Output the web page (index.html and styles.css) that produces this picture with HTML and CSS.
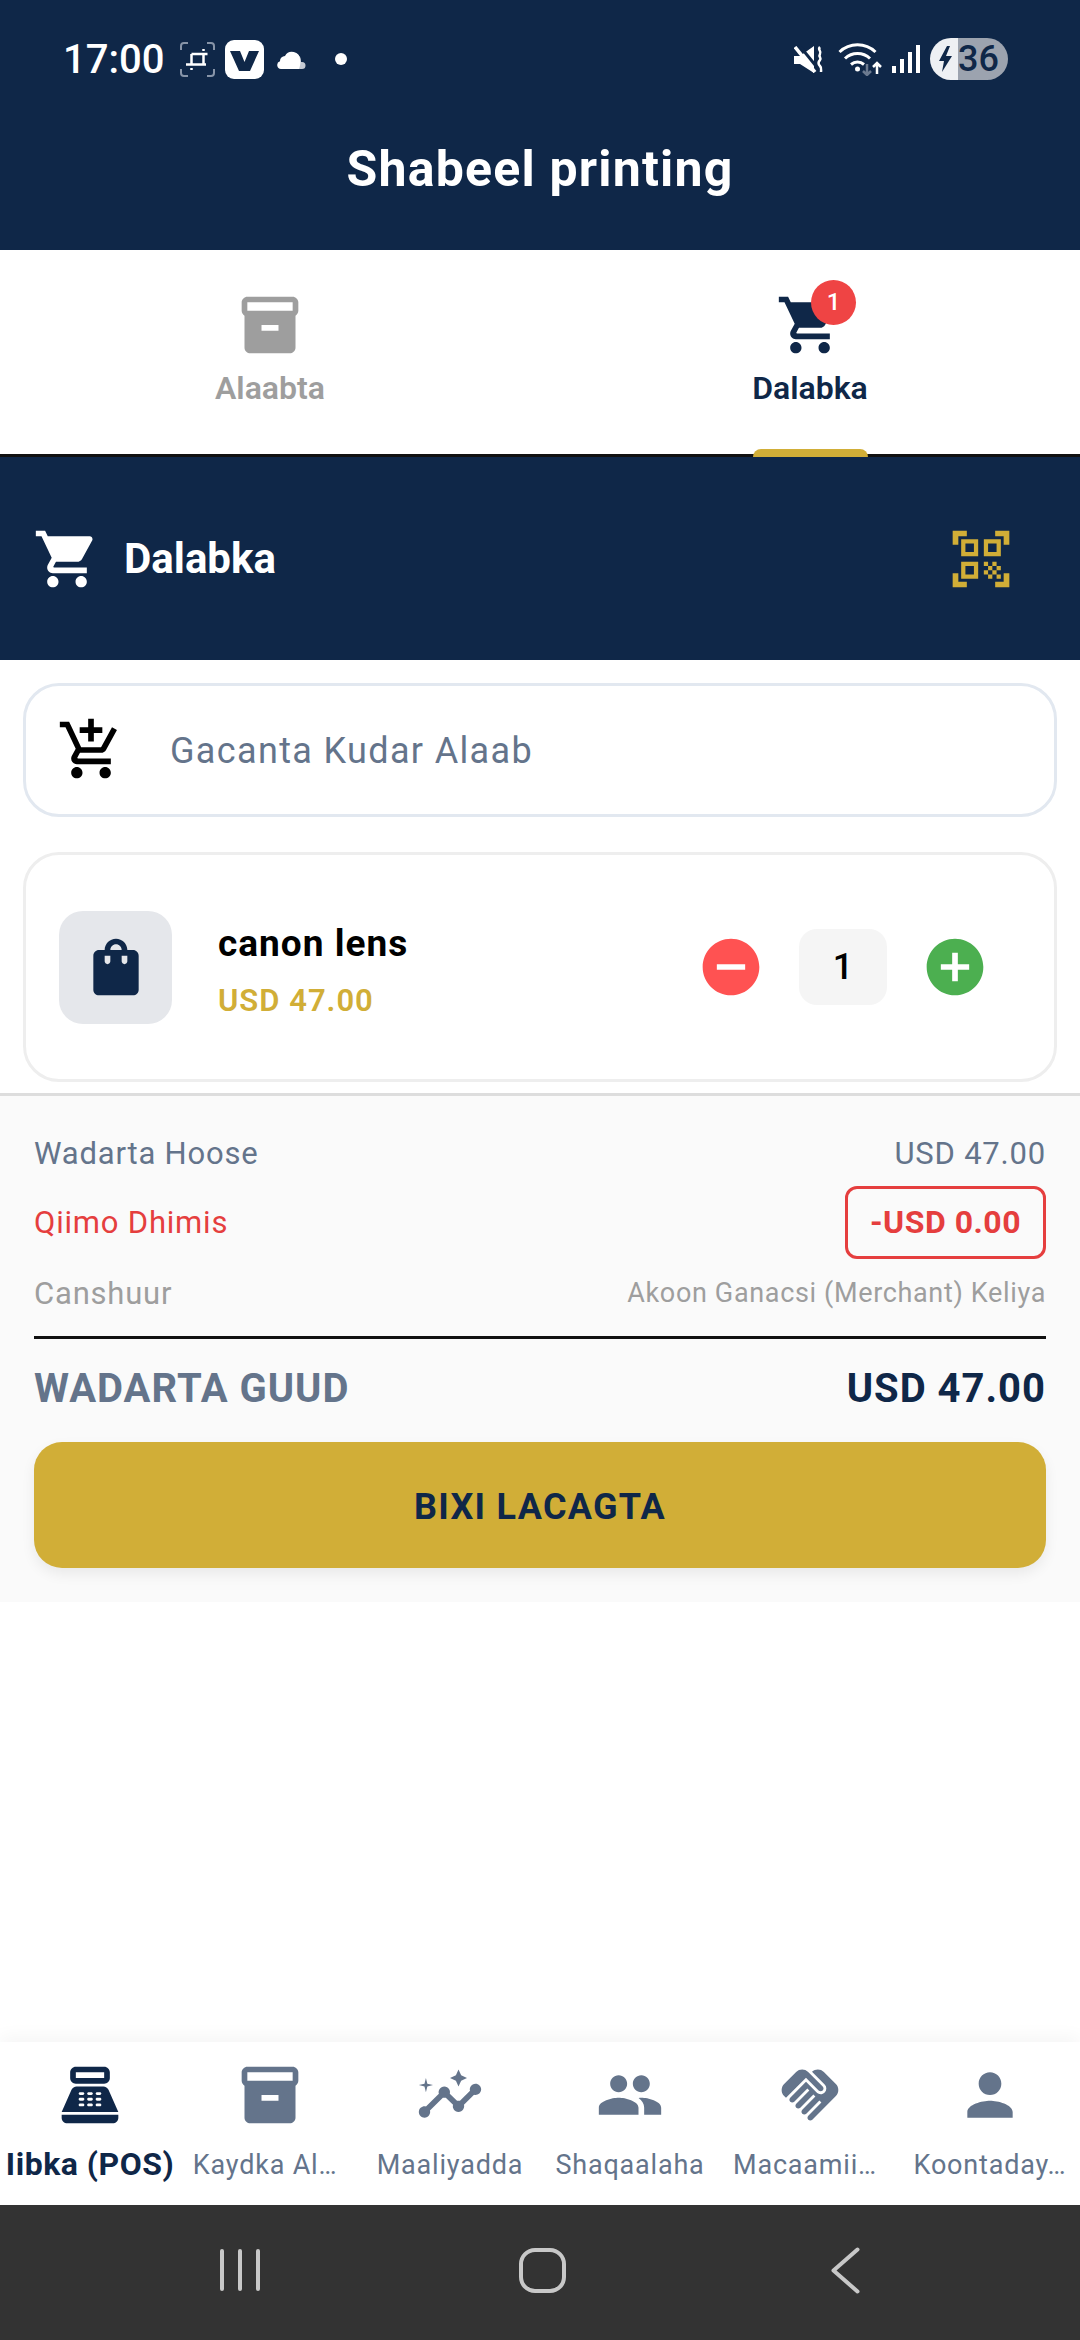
FILE: index.html
```html
<!DOCTYPE html>
<html lang="en">
<head>
    <meta charset="UTF-8">
    <meta name="viewport" content="width=device-width, initial-scale=1.0">
    <title>Shabeel printing</title>
    <link rel="stylesheet" href="styles.css">
</head>
<body>
    <svg class="sprite" aria-hidden="true">
        <symbol id="i-box" viewBox="0 0 24 24"><path d="M20 2H4c-1 0-2 .9-2 2v3.01c0 .72.43 1.34 1 1.69V20c0 1.1 1.1 2 2 2h14c.9 0 2-.9 2-2V8.7c.57-.35 1-.97 1-1.69V4c0-1.1-1-2-2-2zm-5 12H9v-2h6v2zm5-7H4V4l16-.02V7z"/></symbol>
        <symbol id="i-cart" viewBox="0 0 24 24"><path d="M7 18c-1.1 0-1.99.9-1.99 2S5.9 22 7 22s2-.9 2-2-.9-2-2-2zM1 2v2h2l3.6 7.59-1.35 2.45c-.16.28-.25.61-.25.96 0 1.1.9 2 2 2h12v-2H7.42c-.14 0-.25-.11-.25-.25l.03-.12.9-1.63h7.45c.75 0 1.41-.41 1.75-1.03l3.58-6.49c.08-.14.12-.31.12-.48 0-.55-.45-1-1-1H5.21l-.94-2H1zm16 16c-1.1 0-1.99.9-1.99 2s.89 2 1.99 2 2-.9 2-2-.9-2-2-2z"/></symbol>
    </svg>

    <header class="app-header">
        <div class="status-bar">
            <div class="status-left">
                <span class="clock">17:00</span>
                <svg class="st-crop" viewBox="0 0 35 35" fill="none">
                    <path d="M1 8V4a3 3 0 0 1 3-3h4M27 1h4a3 3 0 0 1 3 3v4M34 27v4a3 3 0 0 1-3 3h-4M8 34H4a3 3 0 0 1-3-3v-4" stroke="#8794a8" stroke-width="2"/>
                    <path d="M6 22.5h20M11.5 12h16M11.5 12v10.500M23.500 12v10.500" stroke="#fff" stroke-width="2.500"/>
                    <path d="M23.500 7v2M11.500 26v2" stroke="#fff" stroke-width="2.500"/>
                </svg>
                <span class="st-app">
                    <svg viewBox="0 0 39 39"><path d="M5 11h10l4.500 11L24 11h10l-9 20H14z" fill="#0f2748"/></svg>
                </span>
                <svg class="st-cloud" viewBox="0 0 30 20">
                    <path d="M19 5a7 7 0 0 1 5 8h1a3.500 3.500 0 0 1 0 7h-8z" fill="#c5cad3"/>
                    <path d="M4 20a4 4 0 0 1-1-7.800A5 5 0 0 1 8 7a8 8 0 0 1 15 3.500c1 3 0 6.500-1 9.500z" fill="#fff"/>
                </svg>
                <span class="st-dot"></span>
            </div>
            <div class="status-right">
                <svg class="st-mute" viewBox="0 0 29 27">
                    <path d="M0 10h6L20 0v27L6 18H0z" fill="#fff"/>
                    <path d="M5 -1l21 26" stroke="#0f2748" stroke-width="3"/>
                    <path d="M1 1l20 25" stroke="#fff" stroke-width="3.500"/>
                    <path d="M26 1c-3 3 2 4 0 7s2 4 0 6-2 4 0 6 1 4 1 6" fill="none" stroke="#fff" stroke-width="2.500"/>
                </svg>
                <svg class="st-wifi" viewBox="0 0 44 33" fill="none">
                    <path d="M1.500 9a26 26 0 0 1 36 0M7 15.500a18 18 0 0 1 25 0M13 21.500a10 10 0 0 1 13 0" stroke="#fff" stroke-width="3"/>
                    <circle cx="19.500" cy="26" r="2.500" fill="#fff"/>
                    <path d="M29 21v10M25 28l4 4 4-4" stroke="#6b7a90" stroke-width="2.500"/>
                    <path d="M39 31V21M35 24l4-4 4 4" stroke="#fff" stroke-width="2.500"/>
                </svg>
                <span class="st-signal">
                    <i class="s1"></i><i class="s2"></i><i class="s3"></i><i class="s4"></i>
                </span>
                <span class="st-battery">
                    <svg viewBox="0 0 16 26"><path d="M9 0L1 15h5l-2 11 10-16H8l4-10z" fill="#0f2748"/></svg>
                    <span class="st-level">36</span>
                </span>
            </div>
        </div>
        <h1 class="app-title">Shabeel printing</h1>
    </header>

    <nav class="tabs">
        <div class="tab">
            <svg class="icon"><use href="#i-box"/></svg>
            <span class="tab-label">Alaabta</span>
        </div>
        <div class="tab active">
            <span class="tab-icon">
                <svg class="icon"><use href="#i-cart"/></svg>
                <span class="badge">1</span>
            </span>
            <span class="tab-label">Dalabka</span>
            <span class="tab-marker"></span>
        </div>
    </nav>

    <section class="order-head">
        <div class="order-title">
            <svg class="icon"><use href="#i-cart"/></svg>
            <span>Dalabka</span>
        </div>
        <svg class="icon qr" viewBox="0 0 24 24"><path d="M9.5 6.5v3h-3v-3h3M11 5H5v6h6V5zm-1.500 9.500v3h-3v-3h3M11 13H5v6h6v-6zm6.500-6.500v3h-3v-3h3M19 5h-6v6h6V5zm-6 8h1.500v1.500H13V13zm1.500 1.500H16V16h-1.500v-1.500zM16 13h1.500v1.500H16V13zm-3 3h1.500v1.500H13V16zm1.500 1.500H16V19h-1.500v-1.500zM16 16h1.500v1.500H16V16zm1.500-1.500H19V16h-1.500v-1.500zm0 3H19V19h-1.500v-1.500zM22 7h-2V4h-3V2h5v5zm0 15v-5h-2v3h-3v2h5zM2 22h5v-2H4v-3H2v5zM2 2v5h2V4h3V2H2z"/></svg>
    </section>

    <main class="order-body">
        <div class="search-box">
            <svg class="icon" viewBox="0 0 24 24"><path d="M11 9h2V6h3V4h-3V1h-2v3H8v2h3v3zm-4 9c-1.100 0-1.990.9-1.990 2S5.900 22 7 22s2-.9 2-2-.9-2-2-2zm10 0c-1.100 0-1.990.9-1.990 2s.89 2 1.990 2 2-.9 2-2-.9-2-2-2zm-9.830-3.250l.03-.12.9-1.630h7.450c.75 0 1.410-.41 1.750-1.030l3.860-7.010L19.420 4h-.01l-1.100 2-2.760 5H8.530l-.13-.27L6.160 6l-.95-2-.94-2H1v2h2l3.600 7.590-1.350 2.450c-.16.28-.25.61-.25.96 0 1.100.9 2 2 2h12v-2H7.420c-.13 0-.25-.11-.25-.25z"/></svg>
            <span class="search-text">Gacanta Kudar Alaab</span>
        </div>

        <div class="item-card">
            <div class="item-thumb">
                <svg class="icon" viewBox="0 0 24 24"><path d="M18 6h-2c0-2.210-1.790-4-4-4S8 3.790 8 6H6c-1.100 0-2 .9-2 2v12c0 1.100.9 2 2 2h12c1.100 0 2-.9 2-2V8c0-1.100-.9-2-2-2zm-8 4c0 .55-.45 1-1 1s-1-.45-1-1V8h2v2zm2-6c1.100 0 2 .9 2 2h-4c0-1.100.9-2 2-2zm4 6c0 .55-.45 1-1 1s-1-.45-1-1V8h2v2z"/></svg>
            </div>
            <div class="item-info">
                <div class="item-name">canon lens</div>
                <div class="item-price">USD 47.00</div>
            </div>
            <div class="qty">
                <svg class="icon minus" viewBox="0 0 24 24"><path d="M12 2C6.480 2 2 6.480 2 12s4.480 10 10 10 10-4.480 10-10S17.520 2 12 2zm5 11H7v-2h10v2z"/></svg>
                <span class="qty-value">1</span>
                <svg class="icon plus" viewBox="0 0 24 24"><path d="M12 2C6.480 2 2 6.480 2 12s4.480 10 10 10 10-4.480 10-10S17.520 2 12 2zm5 11h-4v4h-2v-4H7v-2h4V7h2v4h4v2z"/></svg>
            </div>
        </div>
    </main>

    <section class="summary">
        <div class="row row-sub">
            <span>Wadarta Hoose</span>
            <span>USD 47.00</span>
        </div>
        <div class="row row-discount">
            <span>Qiimo Dhimis</span>
            <span class="discount-box">-USD 0.00</span>
        </div>
        <div class="row row-tax">
            <span>Canshuur</span>
            <span class="tax-note">Akoon Ganacsi (Merchant) Keliya</span>
        </div>
        <div class="row row-total">
            <span>WADARTA GUUD</span>
            <span class="total-value">USD 47.00</span>
        </div>
        <button class="pay-button">BIXI LACAGTA</button>
    </section>

    <div class="spacer"></div>

    <nav class="bottom-nav">
        <div class="nav-item active">
            <svg class="icon" viewBox="0 0 24 24"><path d="M17 2H7c-1.100 0-2 .9-2 2v2c0 1.100.9 2 2 2h10c1.100 0 2-.9 2-2V4c0-1.100-.9-2-2-2zm0 4H7V4h10v2zm3 16H4c-1.100 0-2-.9-2-2v-1h20v1c0 1.100-.9 2-2 2zm-1.470-11.810C18.210 9.470 17.490 9 16.700 9H7.300c-.79 0-1.510.47-1.830 1.190L2 18h20l-3.470-7.810zM9.500 16h-1c-.28 0-.5-.22-.5-.5s.22-.5.5-.5h1c.28 0 .5.22.5.5s-.22.5-.5.5zm0-2h-1c-.28 0-.5-.22-.5-.5s.22-.5.5-.5h1c.28 0 .5.22.5.5s-.22.5-.5.5zm0-2h-1c-.28 0-.5-.22-.5-.5s.22-.5.5-.5h1c.28 0 .5.22.5.5s-.22.5-.5.5zm3 4h-1c-.28 0-.5-.22-.5-.5s.22-.5.5-.5h1c.28 0 .5.22.5.5s-.22.5-.5.5zm0-2h-1c-.28 0-.5-.22-.5-.5s.22-.5.5-.5h1c.28 0 .5.22.5.5s-.22.5-.5.5zm0-2h-1c-.28 0-.5-.22-.5-.5s.22-.5.5-.5h1c.28 0 .5.22.5.5s-.22.5-.5.5zm3 4h-1c-.28 0-.5-.22-.5-.5s.22-.5.5-.5h1c.28 0 .5.22.5.5s-.22.5-.5.5zm0-2h-1c-.28 0-.5-.22-.5-.5s.22-.5.5-.5h1c.28 0 .5.22.5.5s-.22.5-.5.5zm0-2h-1c-.28 0-.5-.22-.5-.5s.22-.5.5-.5h1c.28 0 .5.22.5.5s-.22.5-.5.5z"/></svg>
            <span class="nav-label">Iibka (POS)</span>
        </div>
        <div class="nav-item">
            <svg class="icon"><use href="#i-box"/></svg>
            <span class="nav-label cut">Kaydka Al…</span>
        </div>
        <div class="nav-item">
            <svg class="icon" viewBox="0 0 24 24"><path d="M21 8c-1.450 0-2.260 1.440-1.930 2.510l-3.550 3.560c-.3-.09-.74-.09-1.040 0l-2.550-2.550C12.270 10.450 11.460 9 10 9c-1.450 0-2.270 1.440-1.930 2.520l-4.560 4.550C2.440 15.740 1 16.550 1 18c0 1.100.9 2 2 2 1.450 0 2.260-1.440 1.930-2.510l4.550-4.560c.3.09.74.09 1.040 0l2.550 2.550C12.730 16.550 13.540 18 15 18c1.450 0 2.270-1.440 1.930-2.520l3.560-3.550c1.070.33 2.510-.48 2.510-1.930 0-1.100-.9-2-2-2z"/><path d="M15 9l.94-2.070L18 6l-2.060-.93L15 3l-.92 2.070L12 6l2.080.93zM3.500 11L4 9l2-.5L4 8l-.5-2L3 8l-2 .5L3 9z"/></svg>
            <span class="nav-label">Maaliyadda</span>
        </div>
        <div class="nav-item">
            <svg class="icon" viewBox="0 0 24 24"><path d="M16 11c1.660 0 2.990-1.340 2.990-3S17.660 5 16 5c-1.660 0-3 1.340-3 3s1.340 3 3 3zm-8 0c1.660 0 2.990-1.340 2.990-3S9.660 5 8 5C6.340 5 5 6.340 5 8s1.340 3 3 3zm0 2c-2.330 0-7 1.170-7 3.500V19h14v-2.500c0-2.330-4.670-3.500-7-3.500zm8 0c-.29 0-.62.02-.97.05 1.160.84 1.970 1.970 1.970 3.450V19h6v-2.500c0-2.330-4.670-3.500-7-3.500z"/></svg>
            <span class="nav-label">Shaqaalaha</span>
        </div>
        <div class="nav-item">
            <svg class="icon" viewBox="0 0 24 24"><path d="M16.480 10.410c-.39.39-1.040.39-1.430 0l-4.470-4.460-7.050 7.040-.66-.63c-1.170-1.170-1.170-3.070 0-4.240l4.240-4.240c1.170-1.170 3.070-1.170 4.240 0L16.480 9c.39.39.39 1.020 0 1.410zm.7-2.120c.78.78.78 2.050 0 2.830-1.270 1.270-2.610.22-2.830 0l-3.760-3.760-5.570 5.570c-.39.39-.39 1.020 0 1.410.39.39 1.020.39 1.420 0l4.620-4.620.71.71-4.620 4.620c-.39.39-.39 1.020 0 1.410.39.39 1.020.39 1.420 0l4.620-4.620.71.71-4.620 4.620c-.39.39-.39 1.020 0 1.410.39.39 1.020.39 1.410 0l4.620-4.620.71.71-4.620 4.620c-.39.39-.39 1.020 0 1.410.39.39 1.020.39 1.410 0l8.320-8.340c1.170-1.170 1.170-3.070 0-4.240l-4.240-4.240c-1.150-1.150-3.010-1.170-4.180-.06l4.470 4.470z"/></svg>
            <span class="nav-label cut">Macaamii…</span>
        </div>
        <div class="nav-item">
            <svg class="icon" viewBox="0 0 24 24"><path d="M12 12c2.210 0 4-1.790 4-4s-1.790-4-4-4-4 1.790-4 4 1.790 4 4 4zm0 2c-2.670 0-8 1.340-8 4v2h16v-2c0-2.660-5.330-4-8-4z"/></svg>
            <span class="nav-label">Koontaday…</span>
        </div>
    </nav>

    <div class="system-nav">
        <span class="recents"><i></i><i></i><i></i></span>
        <span class="home"></span>
        <svg class="back" viewBox="0 0 29 47" fill="none"><path d="M26.500 2.500L2.500 23.500l24 21" stroke="#c8c8c8" stroke-width="4" stroke-linecap="round" stroke-linejoin="round"/></svg>
    </div>
</body>
</html>
```

FILE: styles.css
```css
* {
    box-sizing: border-box;
}
html, body {
    margin: 0;
    padding: 0;
}
body {
    width: 1080px;
    height: 2340px;
    display: flex;
    flex-direction: column;
    overflow: hidden;
    background: #fff;
    font-family: Roboto, "Noto Sans", sans-serif;
}
.sprite {
    display: none;
}
.icon {
    width: 68px;
    height: 68px;
    display: block;
    flex: none;
    fill: currentColor;
}

/* top bar */
.app-header {
    height: 250px;
    background: #0f2748;
    color: #fff;
}
.status-bar {
    height: 120px;
    display: flex;
    justify-content: space-between;
    align-items: center;
    padding: 0 72px 2px 63px;
}
.status-left, .status-right {
    display: flex;
    align-items: center;
}
.clock {
    font-size: 40px;
    font-weight: 500;
    width: 117px;
}
.st-crop {
    width: 35px;
    height: 35px;
}
.st-app {
    width: 39px;
    height: 39px;
    margin-left: 10px;
    background: #fff;
    border-radius: 9px;
}
.st-app svg {
    display: block;
}
.st-cloud {
    width: 30px;
    height: 20px;
    margin-left: 13px;
}
.st-dot {
    width: 12px;
    height: 12px;
    margin-left: 28px;
    border-radius: 50%;
    background: #fff;
}
.st-mute {
    width: 29px;
    height: 27px;
}
.st-wifi {
    width: 44px;
    height: 33px;
    margin-left: 15px;
}
.st-signal {
    display: flex;
    align-items: flex-end;
    gap: 4px;
    height: 28px;
    margin-left: 10px;
}
.st-signal i {
    display: block;
    width: 4px;
    background: #fff;
}
.s1 { height: 7px; }
.s2 { height: 14px; }
.s3 { height: 21px; }
.s4 { height: 28px; }
.st-battery {
    width: 78px;
    height: 42px;
    margin-left: 10px;
    display: flex;
    align-items: center;
    border-radius: 21px;
    background: linear-gradient(to right, #eef0f3 28px, #9ca3af 28px);
    color: #0f2748;
}
.st-battery svg {
    width: 16px;
    height: 26px;
    margin-left: 8px;
}
.st-level {
    font-size: 36px;
    font-weight: 500;
    margin-left: 4px;
}
.app-title {
    margin: 0;
    padding-top: 21px;
    text-align: center;
    font-size: 50px;
    line-height: 56px;
    font-weight: 700;
    letter-spacing: 1.2px;
}

/* tabs */
.tabs {
    height: 207px;
    display: flex;
    border-bottom: 3px solid #111;
    background: #fff;
}
.tab {
    position: relative;
    width: 540px;
    display: flex;
    flex-direction: column;
    align-items: center;
    padding-top: 41px;
    color: #9e9e9e;
}
.tab.active {
    color: #0f2748;
}
.tab-icon {
    position: relative;
    display: block;
}
.tab-label {
    margin-top: 4px;
    font-size: 32px;
    line-height: 50px;
    font-weight: 600;
}
.badge {
    position: absolute;
    left: 35px;
    top: -11px;
    width: 45px;
    height: 45px;
    border-radius: 50%;
    background: #ef4444;
    color: #fff;
    font-size: 24px;
    line-height: 45px;
    font-weight: 500;
    text-align: center;
}
.tab-marker {
    position: absolute;
    left: 213px;
    right: 212px;
    bottom: -3px;
    height: 8px;
    border-radius: 8px 8px 0 0;
    background: #d1ae37;
}

/* order header */
.order-head {
    height: 203px;
    display: flex;
    justify-content: space-between;
    align-items: center;
    padding: 0 65px 0 33px;
    background: #0f2748;
    color: #fff;
}
.order-title {
    display: flex;
    align-items: center;
    gap: 23px;
    font-size: 42px;
    font-weight: 700;
}
.qr {
    color: #d1ae37;
}

/* order content */
.order-body {
    padding: 23px 23px 0;
}
.search-box {
    height: 134px;
    display: flex;
    align-items: center;
    gap: 45px;
    padding-left: 31px;
    border: 3px solid #e2e8f0;
    border-radius: 36px;
    color: #000;
}
.search-text {
    padding-top: 2px;
    font-size: 36px;
    letter-spacing: 1.35px;
    color: #64748b;
}
.item-card {
    height: 230px;
    margin-top: 35px;
    display: flex;
    align-items: center;
    padding: 0 65px 0 33px;
    border: 3px solid #eeeeee;
    border-radius: 36px;
}
.item-thumb {
    width: 113px;
    height: 113px;
    display: flex;
    align-items: center;
    justify-content: center;
    border-radius: 24px;
    background: #e5e7eb;
    color: #0f2748;
}
.item-info {
    flex: 1;
    margin-left: 46px;
    padding-top: 7px;
}
.item-name {
    font-size: 37px;
    line-height: 42px;
    font-weight: 700;
    letter-spacing: 1px;
    color: #000;
}
.item-price {
    margin-top: 18px;
    font-size: 31px;
    line-height: 36px;
    font-weight: 600;
    letter-spacing: 1px;
    color: #d1ae37;
}
.qty {
    display: flex;
    align-items: center;
}
.minus {
    color: #ff5252;
}
.plus {
    color: #4caf50;
}
.qty-value {
    width: 88px;
    height: 76px;
    margin: 0 34px;
    border-radius: 18px;
    background: #f5f5f5;
    color: #000;
    font-size: 36px;
    line-height: 76px;
    font-weight: 500;
    text-align: center;
}

/* totals */
.summary {
    height: 509px;
    margin-top: 11px;
    padding: 35px 34px 0;
    border-top: 3px solid #dddddd;
    background: #fafafa;
}
.row {
    display: flex;
    justify-content: space-between;
    align-items: center;
}
.row-sub {
    height: 44px;
    font-size: 31px;
    letter-spacing: 0.8px;
    color: #64748b;
}
.row-discount {
    height: 73px;
    margin-top: 11px;
    font-size: 31px;
    letter-spacing: 0.8px;
    color: #e53e3e;
}
.discount-box {
    height: 73px;
    padding: 0 22px;
    border: 3px solid #e53e3e;
    border-radius: 12px;
    font-size: 32px;
    line-height: 67px;
    font-weight: 700;
    letter-spacing: 0.5px;
}
.row-tax {
    height: 44px;
    margin-top: 12px;
    font-size: 31px;
    letter-spacing: 0.8px;
    color: #9e9e9e;
}
.tax-note {
    font-size: 27px;
    letter-spacing: 0.65px;
}
.row-total {
    margin-top: 21px;
    padding-top: 11px;
    height: 90px;
    border-top: 3px solid #111;
    font-size: 40px;
    font-weight: 700;
    letter-spacing: 1px;
    color: #64748b;
}
.total-value {
    color: #0f2748;
}
.pay-button {
    display: block;
    width: 100%;
    height: 126px;
    margin-top: 16px;
    padding-top: 4px;
    border: none;
    border-radius: 28px;
    background: #d1ae37;
    box-shadow: 0 6px 14px rgba(0, 0, 0, 0.07);
    color: #0f2748;
    font-family: inherit;
    font-size: 36px;
    font-weight: 700;
    letter-spacing: 1.3px;
}

.spacer {
    flex: 1;
}

/* bottom menu */
.bottom-nav {
    height: 163px;
    display: flex;
    background: #fff;
    box-shadow: 0 -6px 16px rgba(0, 0, 0, 0.04);
}
.nav-item {
    width: 180px;
    display: flex;
    flex-direction: column;
    align-items: center;
    padding-top: 19px;
    color: #64748b;
}
.nav-item.active {
    color: #0f2748;
}
.nav-label {
    margin-top: 18px;
    font-size: 27px;
    line-height: 36px;
    letter-spacing: 0.8px;
    white-space: nowrap;
}
.nav-label.cut {
    padding-right: 10px;
}
.nav-item.active .nav-label {
    margin-top: 17px;
    font-size: 32px;
    font-weight: 700;
    letter-spacing: 0.5px;
}

/* android buttons */
.system-nav {
    height: 135px;
    display: flex;
    align-items: center;
    background: #333333;
    padding: 0 0 5px 220px;
}
.recents {
    display: flex;
    gap: 14px;
}
.recents i {
    display: block;
    width: 4px;
    height: 42px;
    border-radius: 2px;
    background: #c8c8c8;
}
.home {
    width: 47px;
    height: 45px;
    margin-left: 259px;
    border: 4px solid #c8c8c8;
    border-radius: 16px;
}
.back {
    width: 29px;
    height: 47px;
    margin-left: 265px;
}
```
